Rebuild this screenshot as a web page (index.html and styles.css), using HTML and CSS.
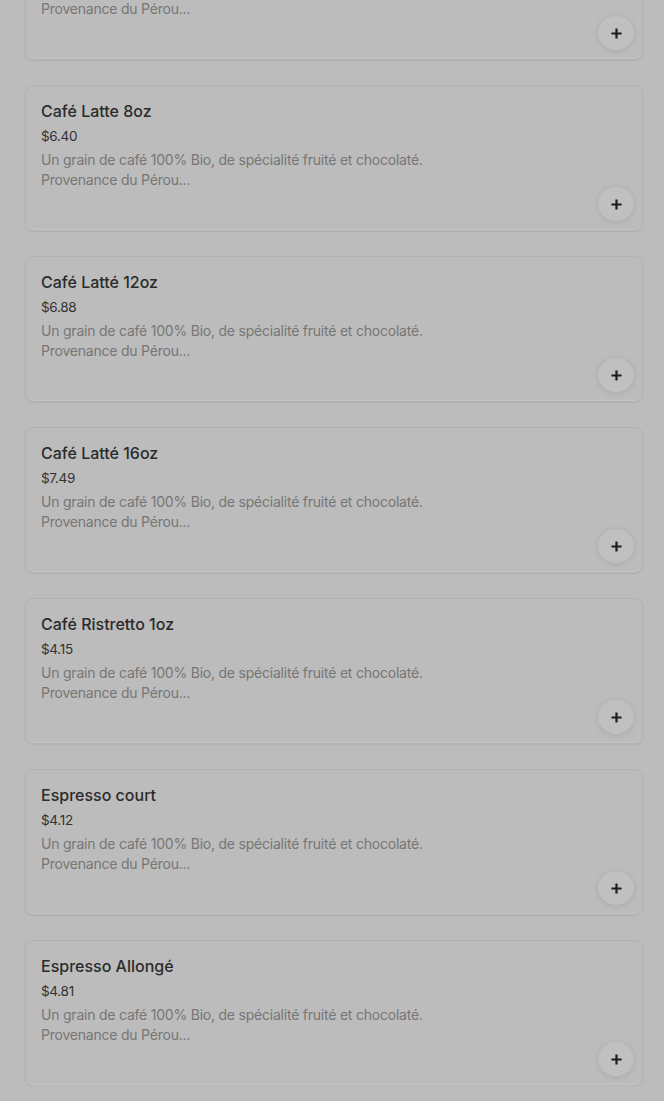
FILE: index.html
```html
<!DOCTYPE html>
<html lang="fr">
<head>
<meta charset="utf-8">
<title>Menu</title>
<link rel="stylesheet" href="styles.css">
</head>
<body>
<div class="overlay">
  <ul class="menu">
    <li class="card">
      <h3 class="title">Café Latte 6oz</h3>
      <div class="price">$5.90</div>
      <p class="desc">Un grain de café 100% Bio, de spécialité fruité et chocolaté.<br>Provenance du Pérou...</p>
      <button class="add" aria-label="Ajouter"><svg viewBox="0 0 14 14" width="13" height="13"><path d="M7 1.5v11M1.5 7h11" stroke="#1e1e1e" stroke-width="2.4" fill="none"/></svg></button>
    </li>
    <li class="card">
      <h3 class="title">Café Latte 8oz</h3>
      <div class="price">$6.40</div>
      <p class="desc">Un grain de café 100% Bio, de spécialité fruité et chocolaté.<br>Provenance du Pérou...</p>
      <button class="add" aria-label="Ajouter"><svg viewBox="0 0 14 14" width="13" height="13"><path d="M7 1.5v11M1.5 7h11" stroke="#1e1e1e" stroke-width="2.4" fill="none"/></svg></button>
    </li>
    <li class="card">
      <h3 class="title">Café Latté 12oz</h3>
      <div class="price">$6.88</div>
      <p class="desc">Un grain de café 100% Bio, de spécialité fruité et chocolaté.<br>Provenance du Pérou...</p>
      <button class="add" aria-label="Ajouter"><svg viewBox="0 0 14 14" width="13" height="13"><path d="M7 1.5v11M1.5 7h11" stroke="#1e1e1e" stroke-width="2.4" fill="none"/></svg></button>
    </li>
    <li class="card">
      <h3 class="title">Café Latté 16oz</h3>
      <div class="price">$7.49</div>
      <p class="desc">Un grain de café 100% Bio, de spécialité fruité et chocolaté.<br>Provenance du Pérou...</p>
      <button class="add" aria-label="Ajouter"><svg viewBox="0 0 14 14" width="13" height="13"><path d="M7 1.5v11M1.5 7h11" stroke="#1e1e1e" stroke-width="2.4" fill="none"/></svg></button>
    </li>
    <li class="card">
      <h3 class="title">Café Ristretto 1oz</h3>
      <div class="price">$4.15</div>
      <p class="desc">Un grain de café 100% Bio, de spécialité fruité et chocolaté.<br>Provenance du Pérou...</p>
      <button class="add" aria-label="Ajouter"><svg viewBox="0 0 14 14" width="13" height="13"><path d="M7 1.5v11M1.5 7h11" stroke="#1e1e1e" stroke-width="2.4" fill="none"/></svg></button>
    </li>
    <li class="card">
      <h3 class="title">Espresso court</h3>
      <div class="price">$4.12</div>
      <p class="desc">Un grain de café 100% Bio, de spécialité fruité et chocolaté.<br>Provenance du Pérou...</p>
      <button class="add" aria-label="Ajouter"><svg viewBox="0 0 14 14" width="13" height="13"><path d="M7 1.5v11M1.5 7h11" stroke="#1e1e1e" stroke-width="2.4" fill="none"/></svg></button>
    </li>
    <li class="card">
      <h3 class="title">Espresso Allongé</h3>
      <div class="price">$4.81</div>
      <p class="desc">Un grain de café 100% Bio, de spécialité fruité et chocolaté.<br>Provenance du Pérou...</p>
      <button class="add" aria-label="Ajouter"><svg viewBox="0 0 14 14" width="13" height="13"><path d="M7 1.5v11M1.5 7h11" stroke="#1e1e1e" stroke-width="2.4" fill="none"/></svg></button>
    </li>
  </ul>
</div>
</body>
</html>
```
FILE: styles.css
```css
* { box-sizing: border-box; }
html, body {
  margin: 0;
  padding: 0;
  background: #bcbcbc;
  overflow: hidden;
}
body {
  font-family: "Inter", "Roboto", "Liberation Sans", sans-serif;
  color: #2a2a2a;
}
.overlay {
  padding: 0 21px 0 25px;
}
.menu {
  list-style: none;
  margin: -86px 0 0;
  padding: 0;
  display: flex;
  flex-direction: column;
  gap: 25px;
}
.card {
  height: 146px;
  border: 1px solid #b2b2b2;
  border-radius: 8px;
  box-shadow: 0 1px 2px rgba(0,0,0,0.06), inset 0 -1px 0 rgba(255,255,255,0.15);
  padding: 15px 8px 9px 15px;
  display: flex;
  flex-direction: column;
}
.title {
  margin: 0;
  font-size: 16px;
  font-weight: 500;
  line-height: 20px;
  color: #2b2b2b;
}
.price {
  margin-top: 5px;
  font-size: 13.5px;
  line-height: 20px;
  color: #333;
  letter-spacing: -0.3px;
}
.desc {
  margin: 4px 0 0;
  font-size: 14px;
  line-height: 20px;
  color: #767676;
  letter-spacing: -0.22px;
}
.add {
  align-self: flex-end;
  margin-top: -3px;
  width: 36px;
  height: 36px;
  border-radius: 50%;
  border: none;
  background: #c0c0c0;
  box-shadow: 0 1px 6px rgba(0,0,0,0.10);
  display: flex;
  align-items: center;
  justify-content: center;
  padding: 0;
}
.add svg { display: block; }
```
